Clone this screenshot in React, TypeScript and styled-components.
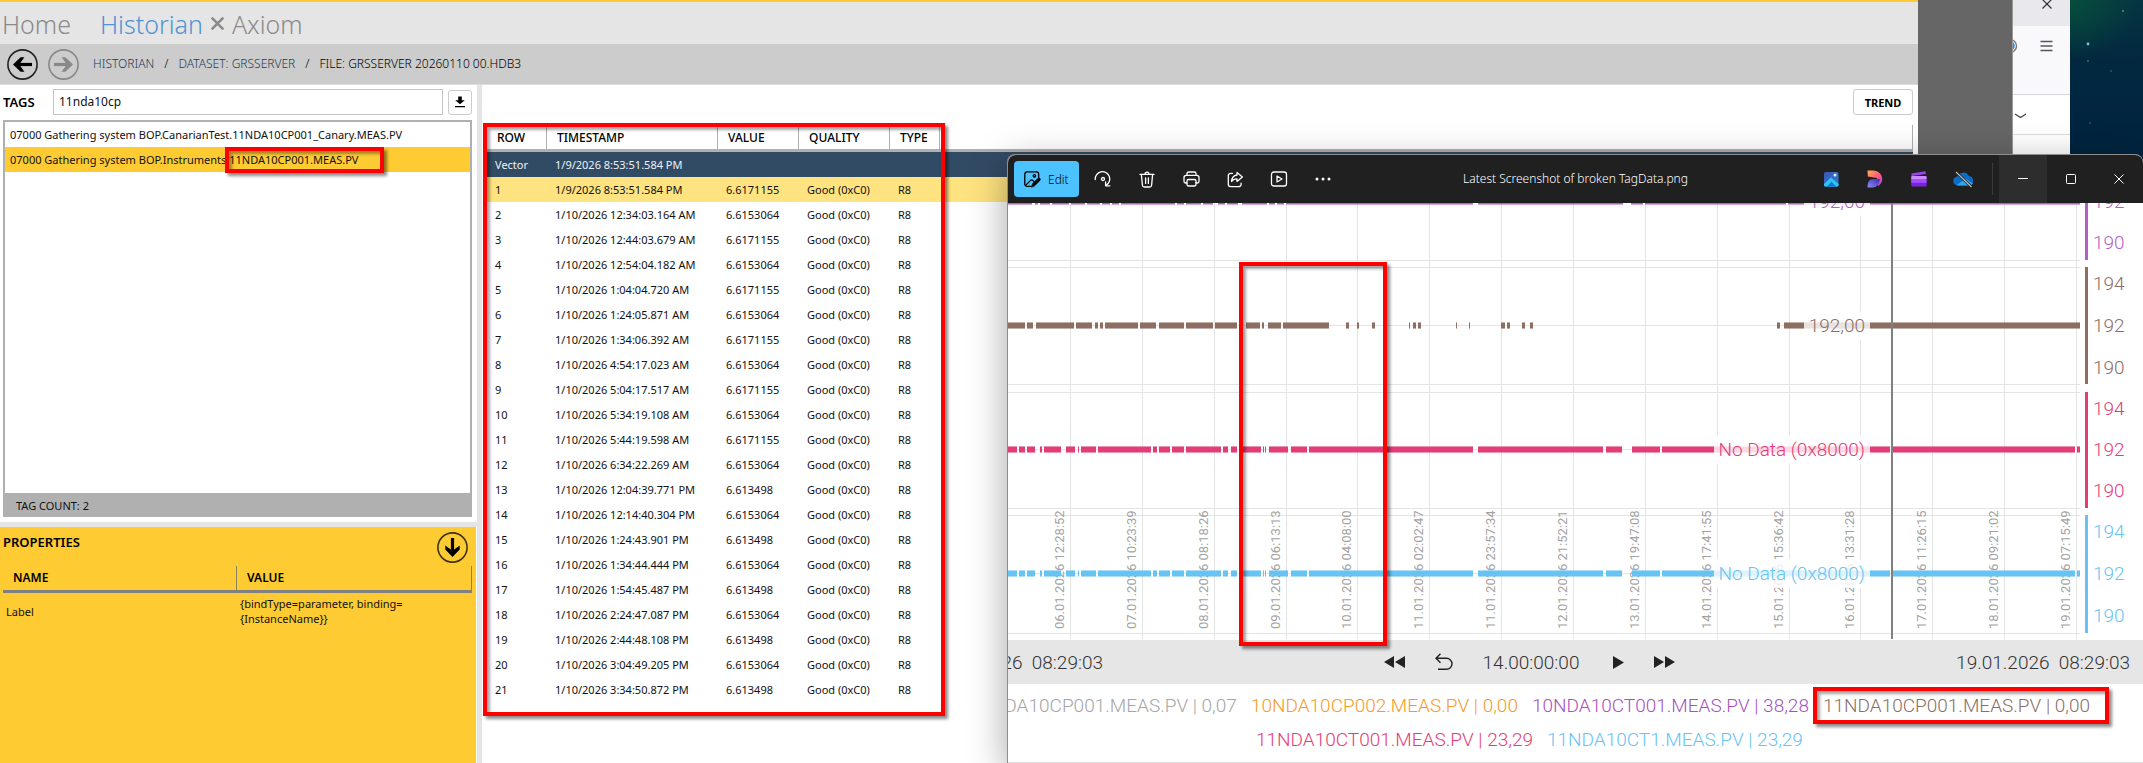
import React from "react";
import styled, { createGlobalStyle } from "styled-components";

const GlobalStyle = createGlobalStyle`
  *, *::before, *::after { box-sizing: border-box; }
  body {
    margin: 0;
    overflow: hidden;
    font-family: "Noto Sans", "Open Sans", sans-serif;
    font-size: 11px;
    color: #111;
  }
  button, input { font: inherit; color: inherit; }
  button { padding: 0; border: 0; background: none; }
  a { color: inherit; text-decoration: none; }
`;

/* ---------- shared ---------- */

const Highlight = styled.span`
  position: absolute;
  z-index: 2;
  border: 4px solid #ff0000;
  box-shadow: 3px 3px 3px rgba(0, 0, 0, 0.45), inset 3px 3px 3px rgba(0, 0, 0, 0.35);
  pointer-events: none;
`;

const Desktop = styled.div`
  position: relative;
  display: flex;
  min-height: 100vh;
  overflow: hidden;
  background: #01243f;
`;

/* ---------- historian window ---------- */

const AppWindow = styled.div`
  flex: 1;
  min-width: 0;
  display: flex;
  flex-direction: column;
  background: #fff;
  border-top: 2px solid #ffcb33;
`;

const TabStrip = styled.nav`
  display: flex;
  align-items: center;
  height: 42px;
  padding-left: 2px;
  background: #e5e5e5;
`;

const Tab = styled.a<{ $active?: boolean }>`
  font-size: 25px;
  font-weight: 300;
  line-height: 34px;
  margin-right: ${(p) => (p.$active ? 8 : 29)}px;
  padding-top: 2px;
  color: ${(p) => (p.$active ? "#4f93d2" : "#8b8b8b")};
`;

const TabClose = styled.button`
  display: flex;
  width: 13px;
  margin-right: 8px;
`;

const Crumbs = styled.nav`
  display: flex;
  align-items: center;
  height: 41px;
  padding-left: 7px;
  gap: 10px;
  background: #ccc;
  border-bottom: 1px solid #ddd;
`;

const RoundButton = styled.button`
  display: flex;
  width: 31px;
  height: 31px;
`;

const Trail = styled.div`
  display: flex;
  gap: 10px;
  margin-left: 4px;
  font-size: 12px;
  font-weight: 300;
  line-height: 16px;
  color: #000;
  a { color: #1d3a58; }
  strong { font-weight: 300; }
`;

const Body = styled.div`
  flex: 1;
  display: grid;
  grid-template-columns: 477px 5px minmax(0, 1fr);
`;

const Splitter = styled.div`
  background: #e5e5e5;
`;

const Side = styled.aside`
  display: grid;
  grid-template-rows: minmax(0, 1fr) 5px 236px;
`;

const TagPane = styled.section`
  display: flex;
  flex-direction: column;
  padding: 4px 5px 5px 3px;
`;

const SearchRow = styled.div`
  display: flex;
  align-items: center;
  height: 26px;
  margin-bottom: 5px;
`;

const SectionLabel = styled.label`
  width: 50px;
  font-size: 13px;
  font-weight: 600;
  line-height: 26px;
  color: #000;
`;

const SearchInput = styled.input`
  flex: 1;
  min-width: 0;
  height: 26px;
  padding: 0 5px 2px;
  border: 1px solid #c4c4c4;
  border-radius: 0;
  outline: 0;
  font-size: 12px;
`;

const OutlineButton = styled.button<{ $wide?: boolean }>`
  display: flex;
  align-items: center;
  justify-content: center;
  width: ${(p) => (p.$wide ? 60 : 24)}px;
  height: ${(p) => (p.$wide ? 26 : 25)}px;
  margin-left: 5px;
  border: 1px solid #ccc;
  border-radius: 3px;
  background: #fff;
  color: #000;
  font-size: 11px;
  font-weight: 700;
`;

const TagBox = styled.div`
  flex: 1;
  display: flex;
  flex-direction: column;
  border: 2px solid #b0b0b0;
`;

const TagList = styled.ul`
  flex: 1;
  margin: 0;
  padding: 0;
  list-style: none;
`;

const TagItem = styled.li<{ $selected?: boolean }>`
  height: 25px;
  padding-left: 5px;
  line-height: 26px;
  white-space: nowrap;
  background: ${(p) => (p.$selected ? "#ffcb33" : "#fff")};
`;

const Marked = styled.span`
  position: relative;
  ${Highlight} { inset: -5px -26px -6px -1px; }
`;

const TagCount = styled.div`
  height: 22px;
  padding-left: 11px;
  line-height: 26px;
  background: #b0b0b0;
`;

const PropertiesPane = styled.section`
  margin-right: 1px;
  padding: 5px 4px 0 3px;
  background: #ffcb33;
`;

const PaneHead = styled.div`
  display: flex;
  justify-content: space-between;
  height: 34px;
  padding-right: 4px;
`;

const PaneTitle = styled.h2`
  margin: 0;
  font-size: 13px;
  font-weight: 600;
  line-height: 20px;
  color: #000;
`;

const PropertyTable = styled.table`
  width: 100%;
  table-layout: fixed;
  border-collapse: separate;
  border-spacing: 0;
  text-align: left;
  th {
    height: 27px;
    padding: 0 10px;
    font-size: 12px;
    font-weight: 600;
    line-height: 24px;
    border-right: 1px solid #8a8159;
    border-bottom: 3px solid #808080;
    color: #000;
  }
  td { height: 36px; padding: 0 3px; line-height: 15px; }
`;

const Main = styled.main`
  display: flex;
  flex-direction: column;
  padding: 4px 5px 0;
`;

const MainTools = styled.div`
  display: flex;
  justify-content: flex-end;
  margin-bottom: 10px;
`;

const GridArea = styled.div`
  position: relative;
  > ${Highlight} { left: -4px; top: -2px; width: 462px; height: 593px; }
`;

const DataTable = styled.table`
  width: 100%;
  table-layout: fixed;
  border-collapse: separate;
  border-spacing: 0;
  text-align: left;
  white-space: nowrap;
  th {
    height: 27px;
    padding: 0 10px;
    font-size: 12px;
    font-weight: 500;
    line-height: 23px;
    color: #000;
    border-right: 1px solid #b0b0b0;
    border-bottom: 3px solid #b0b0b0;
  }
`;

const DataRow = styled.tr<{ $tone?: "vector" | "current" }>`
  background: ${(p) => (p.$tone === "vector" ? "#324b64" : p.$tone === "current" ? "#ffe380" : "#fff")};
  color: ${(p) => (p.$tone === "vector" ? "#eef2f6" : "#111")};
  td { height: 25px; padding: 0 8px; line-height: 24px; }
`;

/* ---------- windows behind ---------- */

const GreyStrip = styled.div`
  width: 94px;
  background: #666;
`;

const Browser = styled.div`
  display: flex;
  flex-direction: column;
  width: 58px;
  background: #fff;
  border-left: 1px solid #999;
`;

const BrowserTabs = styled.div`
  height: 26px;
  background: #e9e8ed;
`;

const BrowserTools = styled.div`
  display: flex;
  height: 69px;
  background: #f9f9fb;
  border-bottom: 1px solid #d5d5da;
`;

const BrowserRow = styled.div`
  height: 40px;
  border-bottom: 1px solid #ddd;
`;

const BareButton = styled.button`
  display: block;
  svg { display: block; }
`;

const Wallpaper = styled.div`
  width: 73px;
  background:
    radial-gradient(ellipse 70px 60px at 0 0, #064d3c, rgba(6, 77, 60, 0)),
    linear-gradient(#063542, #02283f 60px, #01243f 140px);
`;

/* ---------- photo viewer ---------- */

const Viewer = styled.section`
  position: absolute;
  left: 1008px;
  right: 0;
  top: 155px;
  bottom: 0;
  display: flex;
  flex-direction: column;
  overflow: hidden;
  border-radius: 8px 8px 0 0;
  background: #fff;
`;

const ViewerShadow = styled.div`
  position: absolute;
  left: 1007px;
  right: 0;
  top: 154px;
  bottom: 0;
  border-radius: 8px 8px 0 0;
  background: #8d8d8d;
  box-shadow: 0 10px 38px rgba(0, 0, 0, 0.36);
`;

const TitleBar = styled.header`
  display: grid;
  grid-template-columns: 1fr auto 1fr;
  align-items: center;
  height: 48px;
  background: #202020;
  color: #fff;
`;

const ToolGroup = styled.div<{ $end?: boolean }>`
  display: flex;
  align-items: center;
  justify-content: ${(p) => (p.$end ? "flex-end" : "flex-start")};
  padding-left: ${(p) => (p.$end ? 0 : 6)}px;
`;

const EditButton = styled.button`
  display: flex;
  align-items: center;
  gap: 7px;
  width: 65px;
  height: 36px;
  margin-right: 2px;
  padding-left: 10px;
  border-radius: 4px;
  background: #4cc2ff;
  color: #000;
  font-size: 12px;
  font-weight: 300;
`;

const ToolButton = styled.button`
  display: flex;
  align-items: center;
  justify-content: center;
  width: 44px;
  height: 36px;
`;

const Divider = styled.span`
  width: 1px;
  height: 32px;
  margin: 0 6px 0 7px;
  background: #3a3a3a;
`;

const CaptionButton = styled.button<{ $hover?: boolean }>`
  display: flex;
  align-items: center;
  justify-content: center;
  width: 48px;
  height: 48px;
  background: ${(p) => (p.$hover ? "#2d2d2d" : "transparent")};
`;

const FileName = styled.h1`
  margin: 0;
  font-size: 12px;
  font-weight: 300;
  line-height: 20px;
`;

const Picture = styled.div`
  position: relative;
  font-family: Roboto, sans-serif;
  font-size: 19px;
  font-weight: 300;
  border-bottom: 1px solid #ddd;
  > ${Highlight} { left: 231px; top: 59px; width: 148px; height: 384px; }
`;

const ChartSvg = styled.svg`
  display: block;
  .date { font-size: 13px; fill: #a3a3a3; font-weight: 400; }
`;

const TimeBar = styled.div`
  display: grid;
  grid-template-columns: 95px 1fr 187px;
  align-items: center;
  height: 44px;
  background: #e6e6e6;
  color: #333;
  white-space: pre;
`;

const TimeText = styled.time`
  display: flex;
  justify-content: flex-end;
  overflow: hidden;
  &:last-child { padding-right: 13px; }
`;

const Transport = styled.div`
  display: flex;
  align-items: center;
  justify-content: center;
  gap: 30px;
`;

const Legend = styled.div`
  padding: 5px 0;
`;

const LegendRow = styled.div<{ $offset?: boolean }>`
  display: flex;
  gap: 14px;
  height: 34px;
  line-height: 34px;
  white-space: nowrap;
  justify-content: ${(p) => (p.$offset ? "flex-start" : "flex-end")};
  padding: ${(p) => (p.$offset ? "0 0 0 248px" : "0 53px 0 0")};
`;

const LegendItem = styled.span<{ $color: string }>`
  position: relative;
  color: ${(p) => p.$color};
  ${Highlight} { inset: -2px -19px -1px -10px; }
`;

/* ---------- data ---------- */

const rows: [string, string][] = [
  ["1/9/2026 8:53:51.584 PM", "6.6171155"],
  ["1/10/2026 12:34:03.164 AM", "6.6153064"],
  ["1/10/2026 12:44:03.679 AM", "6.6171155"],
  ["1/10/2026 12:54:04.182 AM", "6.6153064"],
  ["1/10/2026 1:04:04.720 AM", "6.6171155"],
  ["1/10/2026 1:24:05.871 AM", "6.6153064"],
  ["1/10/2026 1:34:06.392 AM", "6.6171155"],
  ["1/10/2026 4:54:17.023 AM", "6.6153064"],
  ["1/10/2026 5:04:17.517 AM", "6.6171155"],
  ["1/10/2026 5:34:19.108 AM", "6.6153064"],
  ["1/10/2026 5:44:19.598 AM", "6.6171155"],
  ["1/10/2026 6:34:22.269 AM", "6.6153064"],
  ["1/10/2026 12:04:39.771 PM", "6.613498"],
  ["1/10/2026 12:14:40.304 PM", "6.6153064"],
  ["1/10/2026 1:24:43.901 PM", "6.613498"],
  ["1/10/2026 1:34:44.444 PM", "6.6153064"],
  ["1/10/2026 1:54:45.487 PM", "6.613498"],
  ["1/10/2026 2:24:47.087 PM", "6.6153064"],
  ["1/10/2026 2:44:48.108 PM", "6.613498"],
  ["1/10/2026 3:04:49.205 PM", "6.6153064"],
  ["1/10/2026 3:34:50.872 PM", "6.613498"],
];

type Span = [number, number];

const purpleSpans: Span[] = [
  [0, 24], [27, 30], [32, 42], [44, 61], [63, 77], [79, 92], [94, 102], [104, 111], [113, 167], [169, 176],
  [178, 193], [195, 205], [210, 217], [219, 230], [234, 259], [261, 267], [269, 276], [278, 465], [470, 615],
  [623, 635], [637, 778], [780, 1072],
];
const brownSpans: Span[] = [
  [0, 17], [19, 25], [28, 66], [68, 84], [87, 90], [92, 95], [97, 130], [132, 148], [151, 176], [178, 205],
  [207, 229], [238, 252], [254, 256], [260, 273], [275, 321], [338, 341], [349, 351], [364, 367], [401, 402],
  [405, 408], [410, 413], [448, 449], [461, 462], [493, 497], [499, 502], [514, 517], [522, 525], [769, 772],
  [776, 1072],
];
const dataSpans: Span[] = [
  [0, 9], [11, 17], [19, 27], [32, 34], [36, 53], [58, 67], [70, 71], [73, 88], [90, 143], [145, 149],
  [151, 162], [164, 176], [178, 213], [215, 220], [223, 229], [233, 253], [255, 256], [257, 258], [261, 280],
  [283, 299], [301, 465], [470, 595], [598, 614], [624, 652], [654, 882], [884, 1067], [1069, 1072],
];

const dates = [
  "06.01.2026 12:28:52", "07.01.2026 10:23:39", "08.01.2026 08:18:26", "09.01.2026 06:13:13",
  "10.01.2026 04:08:00", "11.01.2026 02:02:47", "11.01.2026 23:57:34", "12.01.2026 21:52:21",
  "13.01.2026 19:47:08", "14.01.2026 17:41:55", "15.01.2026 15:36:42", "16.01.2026 13:31:28",
  "17.01.2026 11:26:15", "18.01.2026 09:21:02", "19.01.2026 07:15:49",
];

const lanes = [
  { color: "#b45fc8", spans: purpleSpans, mid: -2, top: 0, bottom: 57, label: "192,00", ticks: [[-2, "192"], [39, "190"]] },
  { color: "#8d6e63", spans: brownSpans, mid: 122, top: 64, bottom: 181, label: "192,00", ticks: [[80, "194"], [122, "192"], [164, "190"]] },
  { color: "#e33d78", spans: dataSpans, mid: 246, top: 189, bottom: 305, label: "No Data (0x8000)", ticks: [[205, "194"], [246, "192"], [287, "190"]] },
  { color: "#67c3f3", spans: dataSpans, mid: 370, top: 312, bottom: 430, label: "No Data (0x8000)", ticks: [[328, "194"], [370, "192"], [412, "190"]] },
] as { color: string; spans: Span[]; mid: number; top: number; bottom: number; label: string; ticks: [number, string][] }[];

const gridX = dates.map((_, i) => Math.round(62 + i * 71.85));
const gridY = [57, 64, 122, 181, 189, 246, 305, 312, 370, 430];

function Chart() {
  return (
    <ChartSvg width="1135" height="437" viewBox="0 0 1135 437" role="img" aria-label="Trend chart">
      {gridX.map((x) => <rect key={x} x={x} y="0" width="1" height="436" fill="#e4e4e4" />)}
      {gridY.map((y) => <rect key={y} x="0" y={y} width="1072" height="1" fill="#e4e4e4" />)}
      {dates.map((d, i) => (
        <text key={d} className="date" transform={`translate(${gridX[i] - 6} 426) rotate(-90)`}>{d}</text>
      ))}
      {lanes.map((l, i) => {
        const w = l.label.length > 8 ? 156 : 66;
        return (
          <g key={i} fill={l.color}>
            {l.spans.map(([a, b]) => (
              <g key={a}>
                <rect x={a} y={l.mid - 3} width={b - a} height="7" opacity="0.55" />
                <rect x={a} y={l.mid - 2} width={b - a} height="5" />
              </g>
            ))}
            <rect x={862 - w} y={l.mid - 14} width={w} height="29" fill="#fff" opacity="0.8" />
            <text x="857" y={l.mid + 7} textAnchor="end">{l.label}</text>
            <rect x="1077" y={l.top} width="3" height={l.bottom - l.top} />
            {l.ticks.map(([y, t]) => <text key={t} x="1085" y={y + 7}>{t}</text>)}
          </g>
        );
      })}
      <rect x="883" y="0" width="2" height="436" fill="#808080" />
    </ChartSvg>
  );
}

/* ---------- icons ---------- */

const ArrowCircle = ({ turn = 0, color = "#000", ring = "#222" }) => (
  <svg width="31" height="31" viewBox="0 0 31 31" fill="none">
    <circle cx="15.5" cy="15.5" r="14.6" stroke={ring} strokeWidth="1.6" />
    <g transform={`rotate(${turn} 15.5 15.5)`}>
      <path d="M25 15.5H9" stroke={color} strokeWidth="3.2" />
      <path d="M6 15.5l7.6-7.2h3.8l-5.2 7.2 5.2 7.2h-3.8z" fill={color} />
    </g>
  </svg>
);

const line = { fill: "none", stroke: "#fff", strokeWidth: 1.3, strokeLinecap: "round", strokeLinejoin: "round" } as const;

const EditIcon = () => (
  <svg width="17" height="17" viewBox="0 0 17 17" {...line} stroke="#000">
    <path d="M7 15.4H3A2.3 2.3 0 0 1 .8 13V3A2.3 2.3 0 0 1 3 .8h9.4A2.3 2.3 0 0 1 14.7 3v3.5" />
    <path d="M1.6 14.4l5-5a1.6 1.6 0 0 1 2.2 0l1 1" />
    <circle cx="10.4" cy="4.8" r="1.2" />
    <path d="M7.6 15.8l.9-3.1 5.3-5.3a1.4 1.4 0 0 1 2.1 2.1l-5.3 5.3z" fill="#000" strokeWidth="0.8" />
  </svg>
);
const RotateIcon = () => (
  <svg width="18" height="18" viewBox="0 0 18 18" {...line}>
    <path d="M1.2 9.5A7.3 7.3 0 1 1 12 15.4" />
    <path d="M11.6 11.8v4h4.2" />
    <circle cx="9" cy="9" r="1.5" />
  </svg>
);
const TrashIcon = () => (
  <svg width="16" height="17" viewBox="0 0 16 17" {...line}>
    <path d="M1 3.4h14M6 3.2a2 2 0 0 1 4 0M2.4 3.6l1 10.6a2 2 0 0 0 2 1.8h5.2a2 2 0 0 0 2-1.8l1-10.6M6.6 6.8v5.6M9.4 6.8v5.6" />
  </svg>
);
const PrintIcon = () => (
  <svg width="17" height="16" viewBox="0 0 17 16" {...line}>
    <path d="M4 4.2V2.6A1.6 1.6 0 0 1 5.6 1h5.8A1.6 1.6 0 0 1 13 2.6v1.6M4 12H2.6A1.7 1.7 0 0 1 1 10.300V6.5a2.2 2.2 0 0 1 2.2-2.2h10.6A2.2 2.2 0 0 1 16 6.5v3.8a1.7 1.7 0 0 1-1.7 1.7H13" />
    <rect x="4" y="8.5" width="9" height="6.5" rx="1.4" />
  </svg>
);
const ShareIcon = () => (
  <svg width="17" height="17" viewBox="0 0 17 17" {...line}>
    <path d="M5.5 2.4H3.6a2.3 2.3 0 0 0-2.3 2.3v8.6a2.3 2.3 0 0 0 2.3 2.3h8.2a2.3 2.3 0 0 0 2.3-2.3v-1.2" />
    <path d="M10 1.4l5.4 4.5L10 10.4V7.9c-2.6 0-4.2.8-5.4 2.6.2-3.5 2-6 5.4-6.5z" />
  </svg>
);
const SlideshowIcon = () => (
  <svg width="18" height="16" viewBox="0 0 18 16" {...line}>
    <rect x="1.5" y="1" width="15" height="14" rx="2.3" />
    <path d="M7 5v6l5-3z" />
  </svg>
);
const MoreIcon = () => (
  <svg width="16" height="4" viewBox="0 0 16 4" fill="#fff">
    <circle cx="2" cy="2" r="1.5" /><circle cx="8" cy="2" r="1.5" /><circle cx="14" cy="2" r="1.5" />
  </svg>
);
const PhotosIcon = () => (
  <svg width="15" height="15" viewBox="0 0 15 15">
    <defs>
      <linearGradient id="ph" x1="0" y1="0" x2="1" y2="1"><stop stopColor="#3a57b5" /><stop offset="1" stopColor="#2b7fd6" /></linearGradient>
    </defs>
    <rect width="14.5" height="14.5" rx="1.5" fill="url(#ph)" />
    <path d="M0 12l7-6.5 7.5 6.5v1a1.5 1.5 0 0 1-1.5 1.5H1.5A1.5 1.5 0 0 1 0 13z" fill="#2fc4f5" />
    <path d="M3 14.5l4.5-5 4.5 5z" fill="#0a7fd1" />
    <circle cx="11" cy="3" r="1.5" fill="#e8f4ff" />
  </svg>
);
const DesignerIcon = () => (
  <svg width="16" height="18" viewBox="0 0 16 18">
    <defs>
      <linearGradient id="d1" x1="0" y1="0" x2="1" y2="1"><stop stopColor="#ffb04a" /><stop offset=".5" stopColor="#ff5f7a" /><stop offset="1" stopColor="#b03af0" /></linearGradient>
      <linearGradient id="d2" x1="0" y1="1" x2="1" y2="0"><stop stopColor="#8f8bf5" /><stop offset="1" stopColor="#3a2fb0" /></linearGradient>
    </defs>
    <path d="M.5.5h5.7c5 0 9 4 9 8.500 0 3-1.500 5.500-4 7L10 8 .8 6.500z" fill="url(#d1)" />
    <path d="M.5 17.500c0-5.500 1.500-8.500 6-8.500h6.300c0 5-3.300 8.500-7.300 8.500z" fill="url(#d2)" />
  </svg>
);
const ClipIcon = () => (
  <svg width="16" height="16" viewBox="0 0 16 16">
    <path d="M.5 2.600L14.500.3l.4 2.800L.5 5z" fill="#a044f2" />
    <rect x=".2" y="5" width="15.400" height="10.500" rx="1.500" fill="#7a22e0" />
    <rect x=".2" y="5" width="15.400" height="3.500" rx="1" fill="#c98bff" />
    <rect x=".2" y="8.500" width="15.400" height="3.300" fill="#a64dfa" />
  </svg>
);
const CloudIcon = () => (
  <svg width="21" height="17" viewBox="0 0 21 17">
    <path d="M5 14.500a4.500 4.500 0 0 1-.6-9A6.300 6.300 0 0 1 15.800 5a4.800 4.800 0 0 1 .4 9.500z" fill="#0f6cc4" />
    <path d="M3.500 14.200l9-6.500 7.300 4.800a4 4 0 0 1-3.600 2H5z" fill="#2aa5f0" />
    <path d="M3 1l15.500 15" stroke="#202020" strokeWidth="2.600" />
    <path d="M3 1l15.500 15" stroke="#bbb" strokeWidth="1.200" />
  </svg>
);
const Cross = ({ size = 11, color = "#fff", weight = 1.2 }) => (
  <svg width={size} height={size} viewBox="0 0 10 10"><path d="M.5.5l9 9M9.5.5l-9 9" stroke={color} strokeWidth={weight} /></svg>
);

/* ---------- page ---------- */

export default function App() {
  return (
    <Desktop>
      <GlobalStyle />
      <AppWindow>
        <TabStrip>
          <Tab href="#home">Home</Tab>
          <Tab href="#historian" $active>Historian</Tab>
          <TabClose aria-label="Close Historian"><Cross size={13} color="#8b8b8b" weight={2} /></TabClose>
          <Tab href="#axiom">Axiom</Tab>
        </TabStrip>
        <Crumbs>
          <RoundButton aria-label="Back"><ArrowCircle /></RoundButton>
          <RoundButton aria-label="Forward"><ArrowCircle turn={180} color="#888" ring="#888" /></RoundButton>
          <Trail>
            <a href="#historian">HISTORIAN</a><span>/</span>
            <a href="#dataset">DATASET: GRSSERVER</a><span>/</span>
            <strong>FILE: GRSSERVER 20260110 00.HDB3</strong>
          </Trail>
        </Crumbs>
        <Body>
          <Side>
            <TagPane>
              <SearchRow>
                <SectionLabel htmlFor="tag-search">TAGS</SectionLabel>
                <SearchInput id="tag-search" defaultValue="11nda10cp" />
                <OutlineButton aria-label="Load tags">
                  <svg width="12" height="12" viewBox="0 0 12 12"><path d="M4.2.5h3.600v3.800h3L6 8.300 1.200 4.300h3zM1 10h10v1.300H1z" fill="#000" /></svg>
                </OutlineButton>
              </SearchRow>
              <TagBox>
                <TagList>
                  <TagItem>07000 Gathering system BOP.CanarianTest.11NDA10CP001_Canary.MEAS.PV</TagItem>
                  <TagItem $selected>
                    07000 Gathering system BOP.Instruments<Marked>.11NDA10CP001.MEAS.PV<Highlight /></Marked>
                  </TagItem>
                </TagList>
                <TagCount>TAG COUNT: 2</TagCount>
              </TagBox>
            </TagPane>
            <Splitter />
            <PropertiesPane>
              <PaneHead>
                <PaneTitle>PROPERTIES</PaneTitle>
                <RoundButton aria-label="Collapse properties"><ArrowCircle turn={-90} ring="#40330d" /></RoundButton>
              </PaneHead>
              <PropertyTable>
                <colgroup><col width="234" /><col /></colgroup>
                <thead><tr><th>NAME</th><th>VALUE</th></tr></thead>
                <tbody><tr><td>Label</td><td>{"{bindType=parameter, binding="}<br />{"{InstanceName}}"}</td></tr></tbody>
              </PropertyTable>
            </PropertiesPane>
          </Side>
          <Splitter />
          <Main>
            <MainTools><OutlineButton $wide>TREND</OutlineButton></MainTools>
            <GridArea>
              <DataTable>
                <colgroup>
                  <col width="60" /><col width="171" /><col width="81" /><col width="91" /><col width="50" /><col />
                </colgroup>
                <thead>
                  <tr><th>ROW</th><th>TIMESTAMP</th><th>VALUE</th><th>QUALITY</th><th>TYPE</th><th aria-label="Empty" /></tr>
                </thead>
                <tbody>
                  <DataRow $tone="vector"><td>Vector</td><td>1/9/2026 8:53:51.584 PM</td><td /><td /><td /><td /></DataRow>
                  {rows.map(([time, value], i) => (
                    <DataRow key={time} $tone={i === 0 ? "current" : undefined}>
                      <td>{i + 1}</td><td>{time}</td><td>{value}</td><td>Good (0xC0)</td><td>R8</td><td />
                    </DataRow>
                  ))}
                </tbody>
              </DataTable>
              <Highlight />
            </GridArea>
          </Main>
        </Body>
      </AppWindow>

      <GreyStrip />
      <Browser>
        <BrowserTabs>
          <BareButton aria-label="Close browser">
            <svg width="57" height="26" viewBox="0 0 57 26"><path d="M29.5-.5l9 9M38.5-.5l-9 9" stroke="#333" strokeWidth="1.2" /></svg>
          </BareButton>
        </BrowserTabs>
        <BrowserTools>
          <BareButton aria-label="Browser menu">
            <svg width="57" height="68" viewBox="0 0 57 68">
              <circle cx="-3" cy="20" r="6.500" fill="#fff" stroke="#777" strokeWidth="1.400" />
              <circle cx="-3" cy="20" r="4.800" fill="#2f8fe8" />
              <path d="M27.500 15.500h12M27.500 20h12M27.500 24.500h12" stroke="#55555c" strokeWidth="1.300" />
            </svg>
          </BareButton>
        </BrowserTools>
        <BrowserRow>
          <BareButton aria-label="Expand">
            <svg width="57" height="39" viewBox="0 0 57 39"><path d="M2 19l5.500 3.500 5.500-3.500" fill="none" stroke="#444" strokeWidth="1.400" /></svg>
          </BareButton>
        </BrowserRow>
      </Browser>
      <Wallpaper>
        <svg width="73" height="150" viewBox="0 0 73 150" fill="#7fc4c8">
          <circle cx="18" cy="44" r="1.400" /><circle cx="53" cy="11" r="1" opacity=".6" />
          <circle cx="18" cy="61" r="1" opacity=".4" /><circle cx="41" cy="71" r="1" opacity=".3" />
          <circle cx="20" cy="123" r="1" opacity=".3" />
        </svg>
      </Wallpaper>

      <ViewerShadow />
      <Viewer>
        <TitleBar>
          <ToolGroup>
            <EditButton><EditIcon />Edit</EditButton>
            <ToolButton aria-label="Rotate"><RotateIcon /></ToolButton>
            <ToolButton aria-label="Delete"><TrashIcon /></ToolButton>
            <ToolButton aria-label="Print"><PrintIcon /></ToolButton>
            <ToolButton aria-label="Share"><ShareIcon /></ToolButton>
            <ToolButton aria-label="Slideshow"><SlideshowIcon /></ToolButton>
            <ToolButton aria-label="More"><MoreIcon /></ToolButton>
          </ToolGroup>
          <FileName>Latest Screenshot of broken TagData.png</FileName>
          <ToolGroup $end>
            <ToolButton aria-label="Photos"><PhotosIcon /></ToolButton>
            <ToolButton aria-label="Designer"><DesignerIcon /></ToolButton>
            <ToolButton aria-label="Clipchamp"><ClipIcon /></ToolButton>
            <ToolButton aria-label="OneDrive off"><CloudIcon /></ToolButton>
            <Divider />
            <CaptionButton $hover aria-label="Minimize">
              <svg width="10" height="2" viewBox="0 0 10 2"><rect width="10" height="1" fill="#fff" /></svg>
            </CaptionButton>
            <CaptionButton aria-label="Maximize">
              <svg width="10" height="10" viewBox="0 0 10 10"><rect x=".5" y=".5" width="9" height="9" rx="1" fill="none" stroke="#fff" /></svg>
            </CaptionButton>
            <CaptionButton aria-label="Close"><Cross size={10} weight={1} /></CaptionButton>
          </ToolGroup>
        </TitleBar>
        <Picture>
          <Chart />
          <TimeBar>
            <TimeText>{"05.01.2026  08:29:03"}</TimeText>
            <Transport>
              <BareButton aria-label="Rewind">
                <svg width="21" height="12" viewBox="0 0 21 12" fill="#222"><path d="M10 0v12L0 6zM21 0v12L11 6z" /></svg>
              </BareButton>
              <BareButton aria-label="Undo">
                <svg width="18" height="18" viewBox="0 0 18 18" fill="none" stroke="#222" strokeWidth="1.400"><path d="M5.500.8L1 5.300l4.500 4.500M1 5.300h10.500a5.500 5.500 0 0 1 0 11H3" /></svg>
              </BareButton>
              <span>14.00:00:00</span>
              <BareButton aria-label="Play">
                <svg width="15" height="13" viewBox="-4 0 15 13" fill="#222"><path d="M0 0v13l11-6.500z" /></svg>
              </BareButton>
              <BareButton aria-label="Fast forward">
                <svg width="21" height="12" viewBox="0 0 21 12" fill="#222"><path d="M0 0v12l10-6zM11 0v12l10-6z" /></svg>
              </BareButton>
            </Transport>
            <TimeText>{"19.01.2026  08:29:03"}</TimeText>
          </TimeBar>
          <Legend>
            <LegendRow>
              <LegendItem $color="#a6a6a6">10NDA10CP001.MEAS.PV | 0,07</LegendItem>
              <LegendItem $color="#f79a27">10NDA10CP002.MEAS.PV | 0,00</LegendItem>
              <LegendItem $color="#a94fc0">10NDA10CT001.MEAS.PV | 38,28</LegendItem>
              <LegendItem $color="#8d6e63">11NDA10CP001.MEAS.PV | 0,00<Highlight /></LegendItem>
            </LegendRow>
            <LegendRow $offset>
              <LegendItem $color="#e33d78">11NDA10CT001.MEAS.PV | 23,29</LegendItem>
              <LegendItem $color="#67c3f3">11NDA10CT1.MEAS.PV | 23,29</LegendItem>
            </LegendRow>
          </Legend>
          <Highlight />
        </Picture>
      </Viewer>
    </Desktop>
  );
}
